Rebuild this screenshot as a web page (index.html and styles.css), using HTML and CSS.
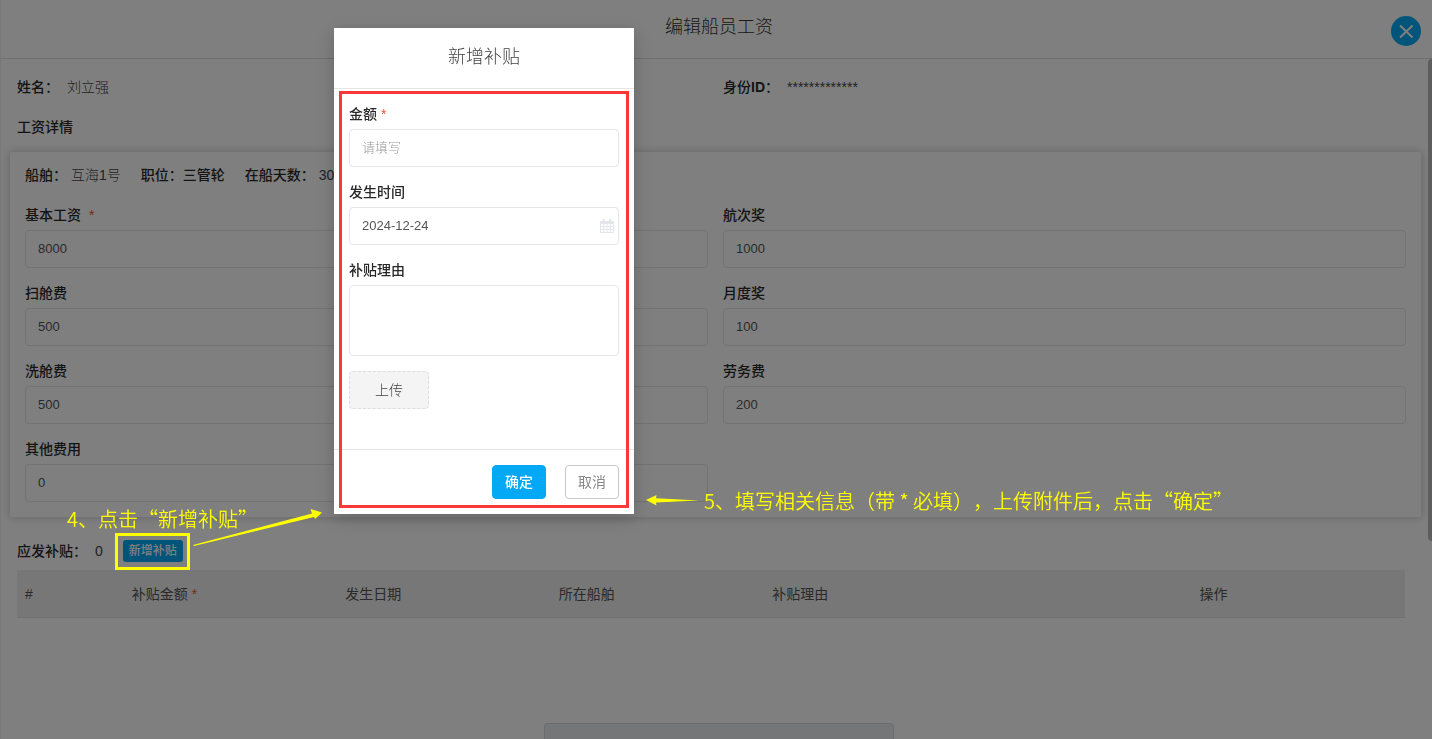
FILE: index.html
```html
<!DOCTYPE html>
<html lang="zh-CN">
<head>
<meta charset="utf-8">
<title>编辑船员工资</title>
<link rel="stylesheet" href="styles.css">
</head>
<body>
<main class="drawer">
  <header class="drawer-header">
    <h1 class="drawer-title">编辑船员工资</h1>
    <button class="close" type="button" aria-label="关闭">
      <svg width="30" height="30" viewBox="0 0 30 30"><path d="M9 9.500L21.500 21.500M21.500 9.500L9 21.500" fill="none" stroke="#fff" stroke-width="2"/></svg>
    </button>
  </header>
  <div class="drawer-body">
    <div class="person">
      <div class="pair"><strong>姓名：</strong><span class="soft">刘立强</span></div>
      <div class="pair"><strong>身份<b>ID</b>：</strong><span>*************</span></div>
    </div>
    <h2 class="section-title">工资详情</h2>
    <section class="card">
      <div class="ship">
        <div class="pair pair-near"><strong>船舶：</strong><span class="soft">互海1号</span></div>
        <strong>职位：三管轮</strong>
        <div class="pair pair-near"><strong>在船天数：</strong><span>30</span></div>
      </div>
      <div class="fields">
        <div class="field"><label for="base">基本工资 <span class="required gap">*</span></label><input class="input" id="base" value="8000"></div>
        <div class="field"><label for="voyage">航次奖</label><input class="input" id="voyage" value="1000"></div>
        <div class="field"><label for="sweep">扫舱费</label><input class="input" id="sweep" value="500"></div>
        <div class="field"><label for="month">月度奖</label><input class="input" id="month" value="100"></div>
        <div class="field"><label for="wash">洗舱费</label><input class="input" id="wash" value="500"></div>
        <div class="field"><label for="labor">劳务费</label><input class="input" id="labor" value="200"></div>
        <div class="field"><label for="other">其他费用</label><input class="input" id="other" value="0"></div>
      </div>
    </section>
    <div class="allowance">
      <strong>应发补贴：</strong><span class="total">0</span>
      <button class="add" type="button">新增补贴</button>
    </div>
    <table class="table">
      <colgroup><col class="c1"><col class="c2"><col class="c2"><col class="c2"><col class="c4"><col class="c2"></colgroup>
      <thead>
        <tr><th>#</th><th>补贴金额 <span class="required">*</span></th><th>发生日期</th><th>所在船舶</th><th>补贴理由</th><th>操作</th></tr>
      </thead>
    </table>
  </div>
  <div class="scrollbar"></div>
  <div class="bottom-bar"></div>
</main>

<div class="mask"></div>

<form class="dialog" role="dialog" aria-labelledby="dialog-title">
  <h2 class="dialog-title" id="dialog-title">新增补贴</h2>
  <div class="dialog-body">
    <div class="field"><label for="amount">金额 <span class="required">*</span></label><input class="input" id="amount" placeholder="请填写"></div>
    <div class="field">
      <label for="date">发生时间</label>
      <div class="date">
        <input class="input" id="date" value="2024-12-24">
        <svg class="calendar" width="14" height="15" viewBox="0 0 14 15">
          <path fill="#e3e7eb" fill-rule="evenodd" d="M1 2h1.500V1a1 1 0 0 1 1-1h.500a1 1 0 0 1 1 1v1h4V1a1 1 0 0 1 1-1h.500a1 1 0 0 1 1 1v1H13a1 1 0 0 1 1 1v10a1 1 0 0 1-1 1H1a1 1 0 0 1-1-1V3a1 1 0 0 1 1-1zM1 5v2h2.200V5zM4.200 5v2h2.300V5zM7.500 5v2h2.300V5zM10.800 5v2H13V5zM1 8v2h2.200V8zM4.200 8v2h2.300V8zM7.500 8v2h2.300V8zM10.800 8v2H13V8zM1 11v2h2.200v-2zM4.200 11v2h2.300v-2zM7.500 11v2h2.300v-2zM10.800 11v2H13v-2z"/>
        </svg>
      </div>
    </div>
    <div class="field"><label for="reason">补贴理由</label><textarea class="input area" id="reason"></textarea></div>
    <button class="upload" type="button">上传</button>
  </div>
  <footer class="dialog-footer">
    <button class="btn btn-primary" type="button">确定</button>
    <button class="btn" type="button">取消</button>
  </footer>
  <div class="frame"></div>
</form>

<div class="mark-box"></div>
<p class="note note-add">4、点击“新增补贴”</p>
<p class="note note-fill">5、填写相关信息（带 * 必填），上传附件后，点击“确定”</p>
<svg class="arrow arrow-add" width="132" height="42" viewBox="0 0 132 42"><path fill="#ff0" d="M2 39L121 7.500L119.500 3L131 6.500L124 13L123 11L3 40z"/></svg>
<svg class="arrow arrow-fill" width="54" height="14" viewBox="0 0 54 14"><path fill="#ff0" d="M0 7L10.500 2L10 5.200L53 7.500L10 9.500L10.500 12.500z"/></svg>
</body>
</html>
```

FILE: styles.css
```css
* { box-sizing: border-box; }

body {
  margin: 0;
  min-height: 100vh;
  overflow: hidden;
  font: 14px/20px "Liberation Sans", "Noto Sans CJK SC", sans-serif;
  color: #444;
  background: #fff;
}

h1, h2, p { margin: 0; }

button, input, textarea { font: inherit; color: inherit; }

strong, label { font-weight: 500; color: #282828; }

.drawer {
  position: relative;
  height: 100vh;
  overflow: hidden;
  border-left: 1px solid #f2f2f2;
}

.drawer-header {
  display: flex;
  justify-content: center;
  height: 59px;
  padding: 14px 0 0 5px;
  border-bottom: 1px solid #dedede;
}

.drawer-title {
  font-size: 18px;
  line-height: 26px;
  font-weight: 300;
  color: #333;
}

.close {
  position: absolute;
  top: 16px;
  right: 11px;
  width: 30px;
  height: 30px;
  padding: 0;
  border: 0;
  border-radius: 50%;
  background: #03a9f4;
}

.close svg { display: block; }

.drawer-body { padding: 18px 11px 0 9px; }

.person {
  display: grid;
  grid-template-columns: 1fr 1fr;
  gap: 8px;
  padding-left: 7px;
}

.pair { display: flex; gap: 8px; }
.pair-near { gap: 4px; }
.soft { font-weight: 300; }

.section-title {
  margin: 20px 0 15px;
  padding-left: 7px;
  font-size: 14px;
  font-weight: 500;
  color: #282828;
}

.card {
  padding: 13px 15px 15px;
  border-radius: 2px;
  box-shadow: 0 0 8px 1px rgba(0, 0, 0, .18);
}

.ship {
  display: flex;
  gap: 20px;
  margin-bottom: 20px;
}

.fields {
  display: grid;
  grid-template-columns: 1fr 1fr;
  gap: 15px;
}

.field {
  display: flex;
  flex-direction: column;
  gap: 5px;
}

.input {
  display: block;
  width: 100%;
  height: 38px;
  padding: 0 12px 2px;
  border: 1px solid #e6e6e6;
  border-radius: 4px;
  background: #fff;
  font-size: 13px;
  color: #555;
}

.input::placeholder {
  color: #999;
  font-weight: 300;
  opacity: 1;
}

.required {
  color: #f0532d;
  font-weight: 400;
}

.gap { margin-left: 4px; }

.allowance {
  display: flex;
  align-items: center;
  margin-top: 23px;
  padding-left: 7px;
}

.total { margin: 0 20px 0 8px; }

.add {
  width: 60px;
  height: 22px;
  padding: 0;
  border: 0;
  border-radius: 3px;
  background: #03a9f4;
  color: #fff;
  font-size: 12px;
  font-weight: 500;
}

.table {
  width: calc(100% - 23px);
  margin: 8px 0 0 7px;
  border-collapse: separate;
  border-spacing: 0;
  table-layout: fixed;
  background: #eee;
}

.c1 { width: 7.692%; }
.c2 { width: 15.385%; }
.c4 { width: 30.769%; }

.table th {
  height: 48px;
  padding: 0 8px;
  border-bottom: 1px solid #e4e4e4;
  font-weight: 400;
  text-align: left;
  color: #555;
}

.scrollbar {
  position: absolute;
  top: 59px;
  right: 0;
  width: 4px;
  height: 482px;
  border-radius: 4px 0 0 4px;
  background: #bbb;
}

.bottom-bar {
  position: absolute;
  bottom: 0;
  left: calc(50% - 173px);
  width: 350px;
  height: 16px;
  border: 1px solid #d8dadd;
  border-bottom: 0;
  border-radius: 4px 4px 0 0;
  background: #ebedf1;
}

.mask {
  position: fixed;
  inset: 0;
  background: rgba(0, 0, 0, .5);
}

.dialog {
  position: absolute;
  top: 28px;
  left: 334px;
  width: 300px;
  background: #fff;
  box-shadow: 0 4px 16px rgba(0, 0, 0, .2);
}

.dialog-title {
  height: 61px;
  padding-top: 16px;
  border-bottom: 1px solid #e5e5e5;
  font-size: 18px;
  line-height: 26px;
  font-weight: 300;
  text-align: center;
  color: #444;
}

.dialog-body {
  display: flex;
  flex-direction: column;
  gap: 15px;
  padding: 15px 15px 40px;
}

.date { position: relative; }

.calendar {
  position: absolute;
  top: 12px;
  right: 5px;
}

.area {
  height: 71px;
  padding: 8px 12px;
  resize: none;
}

.upload {
  width: 80px;
  height: 38px;
  padding: 0;
  border: 1px dashed #ddd;
  border-radius: 4px;
  background: #f4f4f4;
  font-weight: 300;
}

.dialog-footer {
  display: flex;
  justify-content: flex-end;
  gap: 19px;
  padding: 15px;
  border-top: 1px solid #e5e5e5;
}

.btn {
  width: 54px;
  height: 34px;
  padding: 0;
  border: 1px solid #c8c8cc;
  border-radius: 4px;
  background: #fff;
  color: #888;
}

.btn-primary {
  border-color: #03a9f4;
  background: #03a9f4;
  color: #fff;
  font-weight: 500;
}

.frame {
  position: absolute;
  inset: 63px 5px 6px 5px;
  border: 3px solid #fb3838;
  pointer-events: none;
}

.mark-box {
  position: absolute;
  top: 533px;
  left: 115px;
  width: 75px;
  height: 37px;
  border: 3px solid #ff0;
  pointer-events: none;
}

.note {
  position: absolute;
  font: 350 20px/28px "Noto Sans CJK SC", sans-serif;
  text-spacing-trim: space-all;
  color: #ff0;
  white-space: nowrap;
}

.note-add { top: 505px; left: 67px; }
.note-fill { top: 487px; left: 704px; }

.arrow { position: absolute; }
.arrow-add { top: 506px; left: 191px; }
.arrow-fill { top: 493px; left: 646px; }
```
